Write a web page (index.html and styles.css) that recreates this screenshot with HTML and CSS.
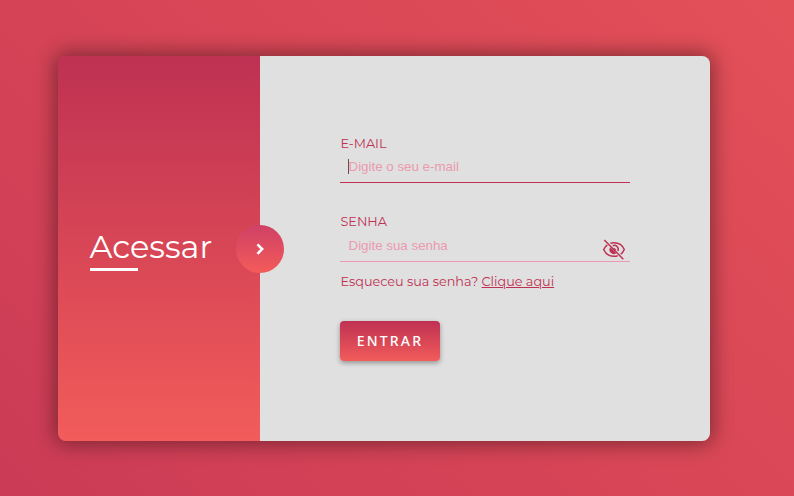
FILE: index.html
```html
<!DOCTYPE html>
<html lang="pt-BR">
<head>
<meta charset="utf-8">
<title>Acessar</title>
<link rel="stylesheet" href="styles.css">
</head>
<body>
<main class="card">
  <section class="intro">
    <h1 class="title">Acessar</h1>
    <div class="badge">
      <svg width="48" height="48" viewBox="0 0 48 48" fill="none" stroke="#fff" stroke-width="2.5"><path d="M21.4 19.300 26.200 24l-4.800 4.800"/></svg>
    </div>
  </section>
  <form class="form">
    <label class="label label-email" for="email">E-MAIL</label>
    <div class="field field-active">
      <span class="caret"></span>
      <input id="email" type="email" placeholder="Digite o seu e-mail">
    </div>
    <label class="label label-password" for="password">SENHA</label>
    <div class="field field-password">
      <input id="password" type="password" placeholder="Digite sua senha">
      <svg class="eye" width="24" height="24" viewBox="0 0 24 24" fill="none" stroke="#be3152" stroke-width="1.5">
        <path d="M8.400 5.300C9.500 4.900 10.700 4.700 12 4.700c4.900 0 8.600 2.800 10.300 6.800-.8 1.900-2 3.500-3.600 4.700M5.300 6.800C3.700 8 2.500 9.600 1.700 11.500c1.700 4 5.400 6.800 10.300 6.800 1.300 0 2.500-.2 3.700-.6"/>
        <path d="M8.300 9.300a4.300 4.300 0 0 0 6 6z" fill="#be3152" stroke="none"/>
        <path d="M10.700 7.700a4 4 0 0 1 5.200 5.300M11.700 10.200l1.900 1.900"/>
        <path d="M2.300 2 21.300 21.200"/>
      </svg>
    </div>
    <p class="forgot"><span class="question">Esqueceu sua senha?</span> <a href="#">Clique aqui</a></p>
    <button class="submit" type="button">ENTRAR</button>
  </form>
</main>
</body>
</html>
```
FILE: styles.css
```css
* { box-sizing: border-box; }
body {
  margin: 0;
  height: 496px;
  padding: 56px 84px 55px 58px;
  overflow: hidden;
  background: linear-gradient(45deg, #cb3b55, #e35058);
  font-family: Montserrat, "Open Sans", sans-serif;
}
.card {
  display: flex;
  width: 652px;
  height: 385px;
  border-radius: 8px;
  box-shadow: 0 0 20px 3px rgba(0, 0, 0, .4);
}
.intro {
  position: relative;
  display: flex;
  flex-direction: column;
  width: 202px;
  padding: 170px 0 0 32px;
  border-radius: 8px 0 0 8px;
  background: linear-gradient(#be3152, #f25c5a);
}
.title {
  margin: 0;
  color: #fff;
  font-size: 32px;
  font-weight: 400;
  line-height: 42px;
  text-indent: -.5px;
}
.title::after {
  content: "";
  display: block;
  width: 48px;
  height: 3px;
  background: #fff;
}
.badge {
  position: absolute;
  top: 169px;
  right: -24px;
  width: 48px;
  height: 48px;
  border-radius: 50%;
  background: linear-gradient(#cf4166, #f45b59);
}
.badge svg { display: block; }
.form {
  display: flex;
  flex-direction: column;
  width: 450px;
  padding: 80px 80px 0;
  border-radius: 0 8px 8px 0;
  background: #e0e0e0;
}
.label {
  height: 16px;
  padding-left: .5px;
  color: #be3152;
  font-size: 12.8px;
  line-height: 16px;
}
.field {
  position: relative;
  display: flex;
  height: 31px;
  border-bottom: 1px solid #eb9aaf;
}
.field-active { border-color: #be3152; }
.label-password { margin-top: 31px; }
.field-password { height: 32px; }
.field input {
  width: 100%;
  height: 28px;
  padding: 0 8px 0 8.5px;
  border: 0;
  outline: 0;
  background: transparent;
  font: 13.333px "Liberation Sans", Arial, sans-serif;
}
.field-password input { height: 30px; }
.field input::placeholder { color: #eb9aaf; opacity: 1; }
.caret {
  position: absolute;
  left: 8px;
  top: 7px;
  width: 1px;
  height: 15px;
  background: #70494f;
}
.eye {
  position: absolute;
  right: 4px;
  top: 8px;
}
.forgot {
  margin: 11px 0 0;
  padding-left: .5px;
  color: #be3152;
  font-size: 12.8px;
  line-height: 18px;
  white-space: nowrap;
}
.forgot a { color: inherit; text-underline-offset: 1px; }
.submit {
  width: 100px;
  height: 40px;
  margin-top: 30px;
  padding: 0 0 1px;
  border: 0;
  border-radius: 4px;
  background: linear-gradient(#be3152, #f25c5a);
  box-shadow: 0 2px 5px rgba(0, 0, 0, .35);
  color: #fff;
  font: 500 14px "Noto Sans", "Open Sans", sans-serif;
  letter-spacing: 2.2px;
}
```
